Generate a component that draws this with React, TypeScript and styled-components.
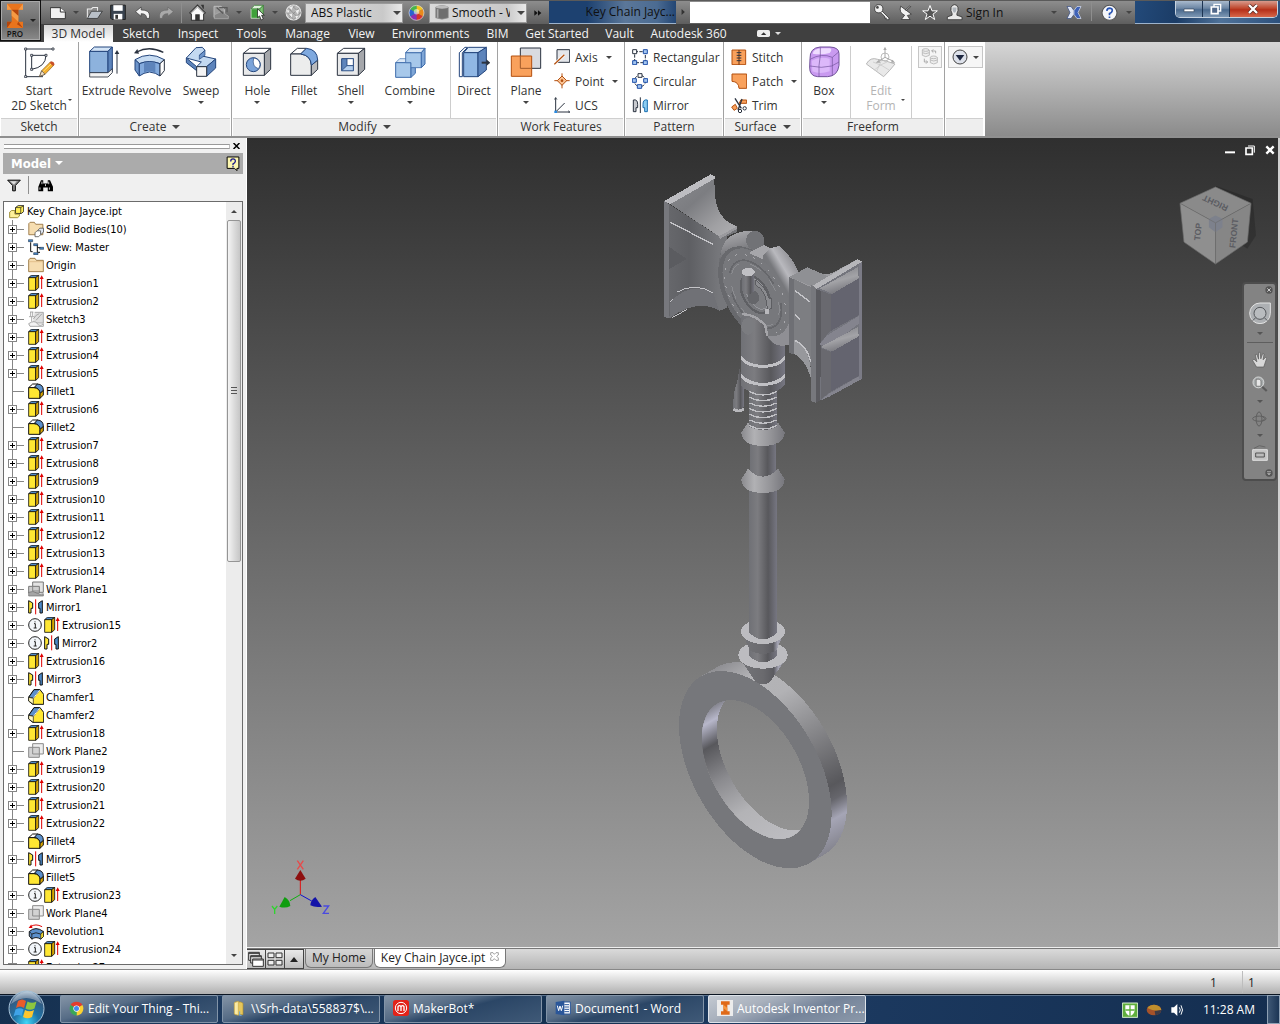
import React from "react";
import styled, { createGlobalStyle, css } from "styled-components";

const UI = `"Open Sans", "Noto Sans", sans-serif`;
const TREE = `"DejaVu Sans Condensed", "Noto Sans", sans-serif`;

const Global = createGlobalStyle`
  * { box-sizing: border-box; }
  html, body { margin: 0; padding: 0; }
  body { font-family: ${UI}; font-size: 12px; color: #333; overflow: hidden; }
  button, input, select { font: inherit; color: inherit; margin: 0; padding: 0; border: 0; background: none; border-radius: 0; }
  svg { display: block; flex: none; }
`;

/* ---------- shared pieces ---------- */

const Shell = styled.div`
  display: flex;
  flex-direction: column;
  height: 100vh;
  background: #c8c8c8;
`;

const Caret = styled.span<{ $size?: number; $color?: string }>`
  display: inline-block;
  flex: none;
  width: 0;
  height: 0;
  border-style: solid;
  border-color: ${(p) => p.$color || "#444"} transparent transparent;
  border-width: ${(p) => p.$size || 3}px ${(p) => p.$size || 3}px 0;
`;

type DrawProps = { box: string; w: number; h: number; children: React.ReactNode };
const Draw = ({ box, w, h, children }: DrawProps) => (
  <svg viewBox={box} width={w} height={h} fill="none" strokeWidth={3} aria-hidden="true">
    {children}
  </svg>
);

/* ---------- title area ---------- */

const Header = styled.header`
  display: flex;
  flex: none;
  height: 42px;
  background: #404040;
`;
const AppButton = styled.button`
  display: flex;
  align-items: center;
  justify-content: center;
  gap: 5px;
  width: 41px;
  height: 41px;
  flex: none;
  border: 1px solid #111;
  background: linear-gradient(#8d8d8d, #6a6a6a 60%, #8a8a8a);
  box-shadow: inset 0 0 0 1px #a8a8a8;
`;
const AppMark = styled.span`
  display: flex;
  flex-direction: column;
  align-items: center;
  font-size: 8px;
  line-height: 9px;
  font-weight: 600;
  color: #111;
`;
const HeaderRows = styled.div`
  display: flex;
  flex-direction: column;
  flex: 1;
  min-width: 0;
`;
const TitleBar = styled.div`
  display: flex;
  align-items: stretch;
  height: 24px;
  border-top: 1px solid #5a5a5a;
  background: linear-gradient(#8d8d8d, #5e5e5e);
`;
const QuickTools = styled.div`
  display: flex;
  align-items: center;
  padding-left: 5px;
`;
const Quick = styled.button<{ $w?: number }>`
  display: flex;
  align-items: center;
  justify-content: center;
  width: ${(p) => p.$w || 24}px;
  height: 22px;
`;
const QuickRule = styled.span`
  width: 1px;
  height: 20px;
  margin: 0 3px;
  background: #8e8e8e;
`;
const Picker = styled.label`
  position: relative;
  display: flex;
  align-items: center;
  width: 98px;
  height: 20px;
  padding-left: 5px;
  gap: 3px;
  color: #111;
  background: linear-gradient(90deg, #d9d9d9, #c9c9c9 80%, #e8e8e8);
  border: 1px solid #999;
  select {
    flex: 1;
    min-width: 0;
    height: 18px;
    appearance: none;
    padding-right: 16px;
  }
  ${Caret} {
    position: absolute;
    right: 1px;
    top: 7px;
  }
`;
const DocTitle = styled.div`
  width: 127px;
  padding-right: 1px;
  line-height: 22px;
  text-align: right;
  color: #101010;
  background: linear-gradient(90deg, #1d4170 0 30%, #5b7799 60%, #4b6b92 85%, #234674);
  border-bottom: 1px solid #9db3cc;
`;
const Search = styled.input`
  width: 180px;
  margin-top: 1px;
  height: 21px;
  background: #fff;
`;
const SignIn = styled.button`
  width: 82px;
  text-align: left;
  color: #111;
`;
const Glass = styled.div`
  display: flex;
  flex: 1;
  justify-content: flex-end;
  align-items: flex-start;
  padding-right: 2px;
  background: linear-gradient(100deg, #234a7a, #1b3c66 30%, #4f7299 60%, #2c507c);
  border-bottom: 1px solid #9db3cc;
`;
const WindowButtons = styled.div`
  display: flex;
  height: 17px;
  border: 1px solid #c7d3e0;
  border-top: 0;
  border-radius: 0 0 5px 5px;
  overflow: hidden;
`;
const WindowButton = styled.button<{ $close?: boolean }>`
  display: flex;
  align-items: center;
  justify-content: center;
  width: ${(p) => (p.$close ? 47 : 27)}px;
  border-right: 1px solid ${(p) => (p.$close ? "transparent" : "#1d3553")};
  background: ${(p) =>
    p.$close
      ? "linear-gradient(#d89a8c, #c0492f 45%, #b5301a 55%, #d7674a)"
      : "linear-gradient(#a9bacd, #6c86a4 45%, #4b6a8e 55%, #7d97b3)"};
`;

const TabRow = styled.nav`
  display: flex;
  align-items: stretch;
  height: 18px;
  padding: 1px 0 0 3px;
`;
const Tab = styled.button<{ $w: number; $on?: boolean }>`
  width: ${(p) => p.$w}px;
  line-height: 16px;
  white-space: nowrap;
  color: #f4f4f4;
  ${(p) =>
    p.$on &&
    css`
      color: #333;
      background: linear-gradient(#d4d4d4, #fff);
    `}
`;
const RibbonToggle = styled.button`
  display: flex;
  align-items: center;
  gap: 5px;
  margin-left: 23px;
`;

/* ---------- ribbon ---------- */

const Ribbon = styled.div`
  display: flex;
  flex: none;
  height: 94px;
  background: linear-gradient(#d6d6d6, #8b8b8b);
`;
const Panel = styled.section<{ $w: number }>`
  display: flex;
  flex-direction: column;
  width: ${(p) => p.$w}px;
  background: #fff;
  border-right: 1px solid #a2a2a2;
  &:last-of-type { border-right-color: #fff; }
`;
const PanelBody = styled.div<{ $pad?: number }>`
  display: flex;
  flex: 1;
  align-items: flex-start;
  padding: 4px 0 0 ${(p) => p.$pad || 0}px;
`;
const PanelName = styled.h2`
  display: flex;
  align-items: center;
  justify-content: center;
  gap: 6px;
  height: 18px;
  margin: 0 1px;
  padding-bottom: 2px;
  font-size: 12px;
  font-weight: 400;
  background: #eeeeee;
  border-top: 1px solid #cfcfcf;
`;
const Big = styled.button<{ $w: number; $off?: boolean }>`
  display: flex;
  flex-direction: column;
  align-items: center;
  width: ${(p) => p.$w}px;
  height: 70px;
  line-height: 15px;
  white-space: nowrap;
  color: ${(p) => (p.$off ? "#b4b4b4" : "#333")};
  svg { margin-bottom: 5px; }
`;
const BigCaret = styled(Caret)`
  margin-top: 3px;
`;
const Anchor = styled.div`
  position: relative;
`;
const SideCaret = styled.span`
  position: absolute;
  right: 6px;
  bottom: 15px;
  line-height: 0;
`;
const Rule = styled.span<{ $gap?: number }>`
  width: 1px;
  height: 72px;
  margin-left: ${(p) => p.$gap || 0}px;
  background: #cdcdcd;
`;
const SmallList = styled.div`
  display: flex;
  flex-direction: column;
`;
const Small = styled.button`
  display: flex;
  align-items: center;
  gap: 5px;
  height: 24px;
  margin: -1px 0 1px;
  white-space: nowrap;
  ${Caret} { margin-left: 3px; }
`;
const PanelSlot = styled.div`
  padding-left: 6px;
`;
const Boxed = styled.button<{ $w: number }>`
  display: flex;
  align-items: center;
  justify-content: center;
  gap: 5px;
  width: ${(p) => p.$w}px;
  height: 22px;
  border: 1px solid #c6c6c6;
  background: #f6f6f6;
`;

/* ---------- ribbon drawings ---------- */

const INK = "#2b3340";
const BLUE = "#23457c";

const icons: Record<string, React.ReactNode> = {
  start: (
    <Draw box="68 142 96 96" w={32} h={32}>
      <path d="M76 151H158M76 151V234H128M94 170H137Q136 205 94 212Z" stroke={INK} />
      <g fill="#fff" stroke={INK} strokeWidth={2.5}>
        <path d="M73 148h6v6h-6zM155 148h6v6h-6zM73 231h6v6h-6zM91 167h6v6h-6zM134 167h6v6h-6zM91 209h6v6h-6z" />
      </g>
      <path d="M118 233L124 216L150 190L161 199L134 227Z" fill="#f5b02e" stroke="#8a5a1d" strokeWidth={2} />
      <path d="M118 233L124 216L134 227Z" fill="#f6e2c6" stroke="#444" strokeWidth={2} />
      <path d="M148 192L153 188Q162 190 162 197L158 202Z" fill="#c8502a" />
      <path d="M129 218L152 196" stroke="#ffe27a" />
    </Draw>
  ),
  extrude: (
    <Draw box="263 142 96 96" w={32} h={32}>
      <path d="M268 158H323V222H268Z" fill="#8db2dd" stroke={BLUE} />
      <path d="M268 158L282 145H336L323 158Z" fill="#d3e4f6" stroke={BLUE} />
      <path d="M323 158L336 145V218L323 232Z" fill="#5d84bb" stroke={BLUE} />
      <path d="M268 222H323L336 210V222L323 235H268Z" fill="#f2f2f2" stroke={INK} strokeWidth={2.5} />
      <path d="M350 225V160" stroke={INK} strokeWidth={3} />
      <path d="M343 166L350 154L357 166Z" fill={INK} />
    </Draw>
  ),
  revolve: (
    <Draw box="400 142 96 96" w={32} h={32}>
      <path d="M408 160Q446 140 488 161" stroke={INK} strokeWidth={4} />
      <path d="M400 164L410 151L415 165Z" fill={INK} />
      <path d="M403 183Q446 156 491 183L478 195Q446 183 416 195Z" fill="#c7dcf2" stroke={BLUE} />
      <path d="M403 183L416 195V232L403 214Z" fill="#6d95cb" stroke={BLUE} />
      <path d="M416 195Q446 183 478 195V232L464 224Q446 216 430 224L416 232Z" fill="#84abdd" stroke={BLUE} />
      <path d="M430 194Q446 188 464 194V222Q446 214 430 222Z" fill="#5d84bb" />
      <path d="M478 195L491 183V216L478 232Z" fill="#fff" stroke={INK} />
    </Draw>
  ),
  sweep: (
    <Draw box="555 142 96 96" w={32} h={32}>
      <path d="M559 178V192L590 216V204Z" fill="#5d84bb" stroke={BLUE} />
      <path d="M559 178L588 147L607 146L615 155L598 170L647 181L620 204H590L604 190Z" fill="#c3d9f1" stroke={BLUE} />
      <path d="M615 155V170L598 182V170Z" fill="#6d95cb" stroke={BLUE} strokeWidth={2} />
      <path d="M620 204L647 181V208L620 233Z" fill="#5d84bb" stroke={BLUE} />
      <path d="M590 204H620V233H590Z" fill="#f4f4f4" stroke={INK} />
    </Draw>
  ),
  hole: (
    <Draw box="726 142 96 96" w={32} h={32}>
      <path d="M733 164L752 149H815L796 164Z" fill="#fff" stroke={INK} />
      <path d="M796 164L815 149V212L796 230Z" fill="#a5a7ab" stroke={INK} />
      <path d="M733 164H796V230H733Z" fill="#e8e9ea" stroke={INK} />
      <circle cx="763" cy="198" r="21" fill="#7aa3d9" stroke={BLUE} />
      <path d="M764 178A20 20 0 0 1 783 198Q782 206 778 210Q758 204 764 178Z" fill="#fff" stroke={BLUE} strokeWidth={2} />
    </Draw>
  ),
  fillet: (
    <Draw box="867 142 96 96" w={32} h={32}>
      <path d="M875 166L895 149H922L905 166Z" fill="#fff" stroke={INK} />
      <path d="M875 166H905Q936 170 937 200V230H875Z" fill="#eceded" stroke={INK} />
      <path d="M937 200L956 184V212L937 230Z" fill="#b9babd" stroke={INK} />
      <path d="M905 166L922 149Q955 152 956 184L937 200Q936 170 905 166Z" fill="#7fa9df" stroke={BLUE} />
    </Draw>
  ),
  shell: (
    <Draw box="1008 142 96 96" w={32} h={32}>
      <path d="M1015 164L1034 149H1097L1078 164Z" fill="#fff" stroke={INK} />
      <path d="M1078 164L1097 149V212L1078 230Z" fill="#a5a7ab" stroke={INK} />
      <path d="M1015 164H1078V230H1015Z" fill="#e8e9ea" stroke={INK} />
      <path d="M1028 180H1063V216H1028Z" fill="#5d84bb" stroke={BLUE} />
      <path d="M1044 180H1063V201H1044Z" fill="#fff" stroke={BLUE} strokeWidth={2.5} />
      <path d="M1028 216L1044 201H1063V216Z" fill="#b5d0ef" stroke={BLUE} strokeWidth={2} />
    </Draw>
  ),
  combine: (
    <Draw box="1184 142 96 96" w={32} h={32}>
      <path d="M1189 192L1201 180H1246L1235 192Z" fill="#dce9f7" stroke="#3e6cab" strokeWidth={2} />
      <path d="M1189 192H1235V236H1189Z" fill="#a7c8ea" stroke="#3e6cab" />
      <path d="M1235 206H1248V224L1235 236Z" fill="#7fa6d6" stroke="#3e6cab" />
      <path d="M1219 162H1266V207H1235V192H1219Z" fill="#a7c8ea" stroke="#3e6cab" strokeWidth={2.5} />
      <path d="M1219 162L1231 149H1277L1266 162Z" fill="#dce9f7" stroke="#3e6cab" />
      <path d="M1266 162L1277 149V196L1266 207Z" fill="#7fa6d6" stroke="#3e6cab" />
    </Draw>
  ),
  direct: (
    <Draw box="105 142 96 96" w={32} h={32}>
      <path d="M109 162L126 146H134L118 162V234H109Z" fill="#fff" stroke={BLUE} />
      <path d="M122 162L136 146H190L165 162Z" fill="#d3e4f6" stroke={BLUE} />
      <path d="M122 162H165V234H122Z" fill="#90b7e4" stroke={BLUE} />
      <path d="M165 162L190 146V214L165 234Z" fill="#5d84bb" stroke={BLUE} />
      <path d="M176 192H192" stroke={INK} strokeWidth={6} />
      <path d="M190 182L202 192L190 202Z" fill={INK} />
    </Draw>
  ),
  plane: (
    <Draw box="255 142 96 96" w={32} h={32}>
      <path d="M286 148H347V209H286Z" fill="#d9dbe0" stroke={INK} />
      <path d="M259 172H320V233H259Z" fill="#f9a15c" stroke="#b3500f" />
      <path d="M286 172V209H320" stroke="#a05a2a" />
    </Draw>
  ),
  axis: (
    <Draw box="393 146 48 48" w={16} h={16}>
      <path d="M402 148H440V186H402Z" fill="#e4e6ea" stroke={INK} />
      <path d="M394 192L424 163" stroke="#fff" strokeWidth={8} />
      <path d="M394 192L424 163" stroke="#b3500f" strokeWidth={4} />
    </Draw>
  ),
  point: (
    <Draw box="391 218 48 48" w={16} h={16}>
      <path d="M415 219V264M392 241H438" stroke="#b3500f" />
      <path d="M415 227L429 241L415 255L401 241Z" fill="#fbc394" stroke="#b3500f" />
      <circle cx="415" cy="241" r="4" fill="#b3500f" />
    </Draw>
  ),
  ucs: (
    <Draw box="392 290 48 48" w={16} h={16}>
      <path d="M397 333V293M397 335H439M397 335L424 308" stroke={INK} />
      <path d="M393 298L397 291L401 298M434 331L440 335L434 339" stroke={INK} strokeWidth={2} />
      <path d="M393 331h8v8h-8z" fill="#2a8be0" />
    </Draw>
  ),
  rectangular: (
    <Draw box="621 146 48 48" w={16} h={16}>
      <path d="M629 154H661V187H629Z" stroke={INK} strokeDasharray="10 4" />
      <path d="M623 148h12v12h-12z" fill="#fff" stroke={INK} />
      <path d="M655 148h12v12h-12zM623 181h12v12h-12zM655 181h12v12h-12z" fill="#a4c6f0" stroke="#1f4fa8" />
    </Draw>
  ),
  circular: (
    <Draw box="621 218 48 48" w={16} h={16}>
      <circle cx="645" cy="242" r="17" stroke={INK} strokeDasharray="8 4" />
      <path d="M639 220h12v11h-12z" fill="#fff" stroke={INK} />
      <path d="M622 235h12v11h-12zM656 235h12v11h-12zM637 253h13v11h-13z" fill="#a4c6f0" stroke="#1f4fa8" />
    </Draw>
  ),
  mirror: (
    <Draw box="619 290 48 48" w={16} h={16}>
      <path d="M644 291V339" stroke={INK} />
      <path d="M623 299Q636 296 636 312V322H631V334H623Z" fill="#c9cbd0" stroke={INK} />
      <path d="M665 299Q652 296 652 312V322H657V334H665Z" fill="#8ccdf2" stroke="#1b6fb0" />
    </Draw>
  ),
  stitch: (
    <Draw box="917 146 48 48" w={16} h={16}>
      <path d="M920 149H961V193H920Z" fill="#f9a15c" stroke="#b3500f" />
      <path d="M941 149V193" stroke="#6b3210" />
      <path d="M934 157H948M934 165H948M934 173H948M934 181H948" stroke={INK} />
    </Draw>
  ),
  patch: (
    <Draw box="917 218 48 48" w={16} h={16}>
      <path d="M920 221H964V264H941Q940 244 920 243Z" fill="#f9a15c" stroke="#b3500f" />
    </Draw>
  ),
  trim: (
    <Draw box="917 290 48 48" w={16} h={16}>
      <path d="M919 320L930 312L936 324L926 330Z" fill="#f9a15c" stroke="#b3500f" />
      <path d="M946 299H964V309H942Z" fill="#f9a15c" stroke="#b3500f" />
      <path d="M929 294L948 324M950 296L938 330" stroke={INK} strokeWidth={4} />
      <circle cx="958" cy="324" r="5" stroke={INK} />
      <circle cx="944" cy="332" r="5" stroke={INK} />
    </Draw>
  ),
  box: (
    <Draw box="1149 142 96 96" w={32} h={32}>
      <path d="M1155 180Q1154 148 1185 145H1215Q1242 146 1242 165V200Q1238 232 1208 234H1178Q1153 232 1154 205Z" fill="#c99af0" stroke="#70529a" />
      <path d="M1163 165Q1166 150 1190 149H1214Q1224 151 1214 163Q1190 170 1163 165Z" fill="#efdcff" />
      <path d="M1160 186Q1184 172 1214 180V218Q1184 228 1162 218Z" fill="#dcb8fa" />
      <path d="M1155 182Q1190 162 1222 176V232M1155 202Q1190 210 1220 202L1242 190M1186 146V170Q1180 200 1182 234M1222 176L1241 160" stroke="#70529a" strokeWidth={2} />
    </Draw>
  ),
  edit: (
    <Draw box="46 142 96 96" w={32} h={32}>
      <path d="M50 196Q62 174 84 182Q110 186 136 196Q122 214 102 234Q78 216 50 196Z" fill="#e9e9e9" stroke="#b9b9b9" />
      <path d="M70 190Q100 200 118 214M74 214Q92 196 112 190M94 188L80 220" stroke="#c6c6c6" strokeWidth={2} />
      <circle cx="106" cy="175" r="12" stroke="#bdbdbd" />
      <path d="M106 176V150M106 176L84 190M106 176L132 188" stroke="#a9a9a9" />
      <path d="M101 154L106 144L111 154ZM88 183L78 192L92 192ZM127 183L137 192L124 192Z" fill="#a9a9a9" />
    </Draw>
  ),
  convert: (
    <Draw box="214 146 54 54" w={18} h={18}>
      <g stroke="#b5b5b5" fill="#eee" strokeWidth={2.5}>
        <path d="M218 152V168Q228 176 239 168V152" />
        <ellipse cx="228" cy="152" rx="10" ry="4" />
        <path d="M242 174V190Q252 198 263 190V174" />
        <ellipse cx="252" cy="174" rx="10" ry="4" />
        <path d="M218 160Q228 166 239 160M242 182Q252 188 263 182" />
        <path d="M258 162V155H246M251 150L246 155L251 160M224 178V188H233M229 183L234 188L229 193" fill="none" stroke="#9f9f9f" />
      </g>
    </Draw>
  ),
  options: (
    <Draw box="304 146 48 48" w={16} h={16}>
      <circle cx="328" cy="170" r="21" fill="#dde1ea" stroke="#444" />
      <path d="M315 164H341L328 181Z" fill="#1d2740" />
    </Draw>
  ),
};

const quickIcons: Record<string, React.ReactNode> = {
  fresh: (
    <Draw box="150 16 48 42" w={16} h={14}>
      <path d="M151 21H181L196 34V54H151Z" fill="#f1f1f1" stroke="#333" />
      <path d="M181 21V34H196" stroke="#333" fill="#fff" />
    </Draw>
  ),
  open: (
    <Draw box="256 16 50 40" w={17} h={14}>
      <path d="M260 51V24H272L276 20H290V30" fill="#8b8b8b" stroke="#eee" />
      <path d="M260 52L272 31H304L290 52Z" fill="#b9c0c8" stroke="#222" strokeWidth={2} />
    </Draw>
  ),
  save: (
    <Draw box="330 12 48 50" w={16} h={17}>
      <path d="M332 15H376V58H336L332 54Z" fill="#39434f" stroke="#222" />
      <path d="M340 15H368V32H340Z" fill="#fff" />
      <path d="M341 41H367V58H341Z" fill="#fff" />
      <path d="M346 44H354V56H346Z" fill="#333" />
    </Draw>
  ),
  undo: (
    <Draw box="400 16 50 42" w={17} h={14}>
      <path d="M404 33L421 19V28Q446 28 446 44V53H437Q438 39 421 39V47Z" fill="#f4f4f4" stroke="#333" strokeWidth={2} />
    </Draw>
  ),
  redo: (
    <Draw box="474 16 50 42" w={17} h={14}>
      <path d="M520 33L503 19V28Q478 28 478 44V53H487Q486 39 503 39V47Z" fill="#a9a9a9" stroke="#666" strokeWidth={2} />
    </Draw>
  ),
  home: (
    <Draw box="565 10 50 50" w={17} h={17}>
      <path d="M567 36L590 13L613 36L608 40V58H572V40Z" fill="#fafafa" stroke="#333" />
      <path d="M585 42H595V58H585ZM601 14H607V24" fill="#333" stroke="#333" />
      <path d="M571 37L590 19L609 37" stroke="#555" strokeWidth={2} />
    </Draw>
  ),
  returnTo: (
    <Draw box="638 14 50 46" w={17} h={15}>
      <path d="M640 18H662L672 28V52H640Z" fill="#9c9c9c" stroke="#bcbcbc" />
      <path d="M641 44L662 34L668 28L674 42L684 48V56H641Z" fill="#858585" stroke="#b4b4b4" strokeWidth={2} />
      <path d="M648 22L668 40M656 22L680 22V36" stroke="#5a5a5a" strokeWidth={4} />
    </Draw>
  ),
  select: (
    <Draw box="746 10 50 50" w={17} h={17}>
      <path d="M752 24H778V52H752Z" fill="#3fa13a" stroke="#e7f5e3" strokeWidth={2} />
      <path d="M752 24L762 14H788L778 24Z" fill="#dff0dc" stroke="#2d7a29" strokeWidth={2} />
      <path d="M778 24L788 14V42L778 52Z" fill="#7cc474" stroke="#2d7a29" strokeWidth={2} />
      <path d="M771 24V50L777 45L782 57L788 54L783 43H791Z" fill="#fff" stroke="#111" strokeWidth={2} />
    </Draw>
  ),
  sphere: (
    <Draw box="850 10 50 50" w={17} h={17}>
      <circle cx="875" cy="35" r="22" fill="#b5b5b5" stroke="#e6e6e6" />
      <path d="M860 22L888 50M855 34L876 56M870 14L896 40M892 22L862 50M880 14L854 40M897 34L876 56" stroke="#858585" strokeWidth={2} />
      <path d="M862 20L874 16L870 28ZM880 30L892 26L888 40ZM862 40L872 38L870 50ZM880 46L890 44L884 54ZM856 28L864 30L858 38Z" fill="#eee" />
    </Draw>
  ),
  wheel: (
    <Draw box="1224 10 50 50" w={17} h={17}>
      <path d="M1249 36V14A22 22 0 0 1 1268 25Z" fill="#f3c41b" />
      <path d="M1249 36L1268 25A22 22 0 0 1 1268 47Z" fill="#e98a1c" />
      <path d="M1249 36L1268 47A22 22 0 0 1 1249 58Z" fill="#d8332a" />
      <path d="M1249 36V58A22 22 0 0 1 1230 47Z" fill="#8a2fb5" />
      <path d="M1249 36L1230 47A22 22 0 0 1 1230 25Z" fill="#2b62d0" />
      <path d="M1249 36L1230 25A22 22 0 0 1 1249 14Z" fill="#46b649" />
      <circle cx="1249" cy="36" r="22" stroke="#ddd" strokeWidth={2} />
      <circle cx="1249" cy="33" r="8" fill="#fff" opacity=".55" />
    </Draw>
  ),
  cylinder: (
    <Draw box="22 12 42 44" w={14} h={15}>
      <path d="M24 18Q43 8 62 18V50Q43 58 24 50Z" fill="#6f6f6f" stroke="#999" strokeWidth={2} />
      <ellipse cx="43" cy="18" rx="18" ry="5" fill="#bcbcbc" />
      <path d="M30 24V50" stroke="#aaa" strokeWidth={5} />
    </Draw>
  ),
  more: (
    <Draw box="326 28 24 18" w={8} h={6}>
      <path d="M327 29L337 37L327 45ZM338 29L348 37L338 45Z" fill="#111" />
    </Draw>
  ),
  right: (
    <Draw box="766 24 18 26" w={5} h={8}>
      <path d="M768 26L780 37L768 48Z" fill="#333" />
    </Draw>
  ),
  key: (
    <Draw box="72 12 50 50" w={17} h={17}>
      <path d="M94 31L116 53V58H108V53H103V48L90 36" fill="#f2f2f2" stroke="#222" strokeWidth={2} />
      <circle cx="86" cy="26" r="12" fill="#f2f2f2" stroke="#222" strokeWidth={2} />
      <circle cx="82" cy="22" r="4" fill="#444" />
    </Draw>
  ),
  dish: (
    <Draw box="144 12 48 50" w={16} h={17}>
      <path d="M152 18Q146 38 164 45L154 58H180L172 46Q180 44 184 42Z" fill="#f2f2f2" stroke="#222" strokeWidth={2} />
      <path d="M167 31L182 17" stroke="#222" strokeWidth={5} />
      <path d="M167 31L182 17" stroke="#fff" strokeWidth={2} />
    </Draw>
  ),
  star: (
    <Draw box="214 12 48 50" w={16} h={17}>
      <path d="M238 16L244 32H260L247 42L252 58L238 48L224 58L229 42L216 32H232Z" fill="#555" stroke="#fff" />
    </Draw>
  ),
  person: (
    <Draw box="286 10 50 50" w={17} h={17}>
      <path d="M290 56V48L304 43V38Q299 30 301 20Q304 12 311 12Q319 12 321 20Q323 30 318 38V43L333 48V56Z" fill="#e9e9e9" stroke="#222" strokeWidth={2} />
      <path d="M305 20Q305 34 311 36Q317 34 317 20Z" fill="#aeb4bb" />
    </Draw>
  ),
  exchange: (
    <Draw box="648 14 48 44" w={16} h={15}>
      <path d="M651 18H663L672 30V42L663 54H651L660 36Z" fill="#dfe6f5" stroke="#34497f" strokeWidth={2} />
      <path d="M693 18H681L672 30V42L681 54H693L684 36Z" fill="#3e62b8" stroke="#dfe6f5" strokeWidth={2} />
    </Draw>
  ),
  help: (
    <Draw box="752 10 50 50" w={17} h={17}>
      <circle cx="777" cy="36" r="22" fill="#f5f7fb" stroke="#555" />
      <path d="M769 30Q770 22 778 22Q786 23 785 30Q784 35 777 38V43M777 47V51" stroke="#2a55b5" strokeWidth={5} />
    </Draw>
  ),
};

const tabs: [string, number][] = [
  ["3D Model", 69], ["Sketch", 56], ["Inspect", 58], ["Tools", 49], ["Manage", 63], ["View", 45],
  ["Environments", 93], ["BIM", 41], ["Get Started", 78], ["Vault", 47], ["Autodesk 360", 91],
];

const TopArea = () => (
  <Header>
    <AppButton aria-label="Application menu">
      <AppMark>
        <Draw box="20 12 60 78" w={20} h={26}>
          <path d="M26 14H74V32H60V68H74V87H26V68H40V32H26Z" fill="#e8741d" />
          <path d="M26 14L40 32H26ZM60 32L74 14V32ZM40 32L60 50V68L40 50Z" fill="#f59a44" />
          <path d="M26 68L40 68L26 87ZM60 32V50L40 32ZM60 68L74 87L56 76Z" fill="#b3450c" />
        </Draw>
        PRO
      </AppMark>
      <Caret $color="#222" />
    </AppButton>
    <HeaderRows>
      <TitleBar>
        <QuickTools>
          <Quick aria-label="New">{quickIcons.fresh}</Quick>
          <Quick $w={12} aria-label="New options"><Caret /></Quick>
          <Quick aria-label="Open">{quickIcons.open}</Quick>
          <Quick aria-label="Save">{quickIcons.save}</Quick>
          <Quick aria-label="Undo">{quickIcons.undo}</Quick>
          <Quick aria-label="Redo">{quickIcons.redo}</Quick>
          <QuickRule />
          <Quick aria-label="Home">{quickIcons.home}</Quick>
          <Quick aria-label="Return">{quickIcons.returnTo}</Quick>
          <Quick $w={12} aria-label="Return options"><Caret /></Quick>
          <Quick aria-label="Select">{quickIcons.select}</Quick>
          <Quick $w={12} aria-label="Select options"><Caret /></Quick>
          <Quick aria-label="Material">{quickIcons.sphere}</Quick>
          <Picker>
            <select aria-label="Material"><option>ABS Plastic</option></select>
            <Caret $size={4} />
          </Picker>
          <Quick $w={26} aria-label="Appearance">{quickIcons.wheel}</Quick>
          <Picker>
            {quickIcons.cylinder}
            <select aria-label="Appearance"><option>Smooth - White</option></select>
            <Caret $size={4} />
          </Picker>
          <Quick $w={22} aria-label="More tools">{quickIcons.more}</Quick>
        </QuickTools>
        <DocTitle>Key Chain Jayc...</DocTitle>
        <Quick $w={14} aria-label="Show search">{quickIcons.right}</Quick>
        <Search aria-label="Search help" />
        <Quick aria-label="Search">{quickIcons.key}</Quick>
        <Quick aria-label="Subscription">{quickIcons.dish}</Quick>
        <Quick aria-label="Favorites">{quickIcons.star}</Quick>
        <Quick aria-label="Account">{quickIcons.person}</Quick>
        <SignIn>Sign In</SignIn>
        <Quick $w={12} aria-label="Account options"><Caret /></Quick>
        <Quick $w={28} aria-label="Exchange">{quickIcons.exchange}</Quick>
        <QuickRule />
        <Quick $w={28} aria-label="Help">{quickIcons.help}</Quick>
        <Quick $w={12} aria-label="Help options"><Caret /></Quick>
        <Glass>
          <WindowButtons>
            <WindowButton aria-label="Minimize">
              <Draw box="0 0 36 30" w={12} h={10}><path d="M3 15H33V23H3Z" fill="#fff" stroke="#3a4a5e" strokeWidth={2} /></Draw>
            </WindowButton>
            <WindowButton aria-label="Restore">
              <Draw box="0 0 36 36" w={12} h={12}>
                <path d="M12 4H32V24H12Z" stroke="#fff" strokeWidth={4} />
                <path d="M4 12H24V32H4Z" fill="#51688a" stroke="#fff" strokeWidth={5} />
              </Draw>
            </WindowButton>
            <WindowButton $close aria-label="Close">
              <Draw box="0 0 36 30" w={12} h={10}>
                <path d="M6 3L30 27M30 3L6 27" stroke="#5a2a22" strokeWidth={11} />
                <path d="M6 3L30 27M30 3L6 27" stroke="#fff" strokeWidth={7} />
              </Draw>
            </WindowButton>
          </WindowButtons>
        </Glass>
      </TitleBar>
      <TabRow>
        {tabs.map(([name, w], i) => (
          <Tab key={name} $w={w} $on={i === 0}>{name}</Tab>
        ))}
        <RibbonToggle aria-label="Collapse ribbon">
          <Draw box="0 0 39 21" w={13} h={7}>
            <rect width="39" height="21" rx="5" fill="#eee" />
            <path d="M12 15L20 7L28 15Z" fill="#333" />
          </Draw>
          <Caret $color="#ddd" />
        </RibbonToggle>
      </TabRow>
    </HeaderRows>
  </Header>
);

const RibbonBar = () => (
  <Ribbon>
    <Panel $w={79}>
      <PanelBody>
        <Anchor>
          <Big $w={78}>{icons.start}<span>Start</span><span>2D Sketch</span></Big>
          <SideCaret><Caret $size={2} /></SideCaret>
        </Anchor>
      </PanelBody>
      <PanelName>Sketch</PanelName>
    </Panel>
    <Panel $w={153}>
      <PanelBody $pad={1}>
        <Big $w={47}>{icons.extrude}Extrude</Big>
        <Big $w={46}>{icons.revolve}Revolve</Big>
        <Big $w={56}>{icons.sweep}Sweep<BigCaret /></Big>
      </PanelBody>
      <PanelName>Create <Caret $size={4} /></PanelName>
    </Panel>
    <Panel $w={266}>
      <PanelBody $pad={2}>
        <Big $w={47}>{icons.hole}Hole<BigCaret /></Big>
        <Big $w={47}>{icons.fillet}Fillet<BigCaret /></Big>
        <Big $w={47}>{icons.shell}Shell<BigCaret /></Big>
        <Big $w={71}>{icons.combine}Combine<BigCaret /></Big>
        <Rule $gap={5} />
        <Big $w={46}>{icons.direct}Direct</Big>
      </PanelBody>
      <PanelName>Modify <Caret $size={4} /></PanelName>
    </Panel>
    <Panel $w={127}>
      <PanelBody>
        <Big $w={56}>{icons.plane}Plane<BigCaret /></Big>
        <SmallList>
          <Small>{icons.axis}Axis <Caret /></Small>
          <Small>{icons.point}Point <Caret /></Small>
          <Small>{icons.ucs}UCS</Small>
        </SmallList>
      </PanelBody>
      <PanelName>Work Features</PanelName>
    </Panel>
    <Panel $w={99}>
      <PanelBody $pad={7}>
        <SmallList>
          <Small>{icons.rectangular}Rectangular</Small>
          <Small>{icons.circular}Circular</Small>
          <Small>{icons.mirror}Mirror</Small>
        </SmallList>
      </PanelBody>
      <PanelName>Pattern</PanelName>
    </Panel>
    <Panel $w={78}>
      <PanelBody $pad={7}>
        <SmallList>
          <Small>{icons.stitch}Stitch</Small>
          <Small>{icons.patch}Patch <Caret /></Small>
          <Small>{icons.trim}Trim</Small>
        </SmallList>
      </PanelBody>
      <PanelName>Surface <Caret $size={4} /></PanelName>
    </Panel>
    <Panel $w={143}>
      <PanelBody>
        <Big $w={44}>{icons.box}Box<BigCaret /></Big>
        <Rule $gap={4} />
        <Anchor>
          <Big $w={60} $off>{icons.edit}<span>Edit</span><span>Form</span></Big>
          <SideCaret><Caret $size={2} /></SideCaret>
        </Anchor>
        <Rule />
        <PanelSlot><Boxed $w={24} aria-label="Convert">{icons.convert}</Boxed></PanelSlot>
      </PanelBody>
      <PanelName>Freeform</PanelName>
    </Panel>
    <Panel $w={40}>
      <PanelBody $pad={3}>
        <Boxed $w={35} aria-label="Panel options">{icons.options}<Caret /></Boxed>
      </PanelBody>
      <PanelName />
    </Panel>
  </Ribbon>
);

/* ---------- browser tree ---------- */

const Middle = styled.div`
  display: flex;
  flex: 1;
  min-height: 0;
  border-top: 2px solid #8f8f8f;
`;
const Sidebar = styled.aside`
  display: flex;
  flex-direction: column;
  flex: none;
  width: 247px;
  padding: 1px 3px 4px;
  background: #f0f0f0;
  border-right: 1px solid #fff;
  font-family: ${TREE};
  font-size: 11px;
  color: #000;
`;
const GripRow = styled.div`
  display: flex;
  align-items: center;
  justify-content: space-between;
  height: 14px;
  padding: 0 3px 0 1px;
`;
const Grip = styled.span`
  width: 226px;
  height: 5px;
  border: 1px solid #9a9a9a;
  border-left: 0;
  border-right-color: #bbb;
  background: #fff;
`;
const Mini = styled.button`
  line-height: 0;
`;
const ModelBar = styled.div`
  display: flex;
  align-items: center;
  height: 21px;
  padding: 0 3px 1px 8px;
  background: #ababab;
`;
const ModelMenu = styled.button`
  display: flex;
  align-items: center;
  gap: 4px;
  flex: 1;
  font-size: 13px;
  font-weight: 700;
  color: #fff;
`;
const TreeTools = styled.div`
  display: flex;
  align-items: center;
  height: 27px;
  padding: 0 4px 5px;
  gap: 7px;
`;
const ToolRule = styled.span`
  width: 1px;
  height: 18px;
  background: #8f8f8f;
`;
const TreeBox = styled.div`
  display: flex;
  flex: 1;
  min-height: 0;
  border: 1px solid #6b6b6b;
  background: #fff;
`;
const Tree = styled.ul`
  flex: 1;
  margin: 0;
  padding: 0;
  list-style: none;
  overflow: hidden;
`;
const Node = styled.li<{ $root?: boolean }>`
  display: flex;
  align-items: center;
  gap: ${(p) => (p.$root ? 3 : 2)}px;
  height: 18px;
  padding-left: ${(p) => (p.$root ? 5 : 4)}px;
  white-space: nowrap;
`;
const Track = styled.div`
  display: flex;
  flex-direction: column;
  width: 16px;
  background: #ececec;
`;
const Arrow = styled.button<{ $down?: boolean }>`
  display: flex;
  align-items: center;
  justify-content: center;
  height: 18px;
  span { transform: ${(p) => (p.$down ? "none" : "rotate(180deg)")}; }
`;
const Thumb = styled.div`
  display: flex;
  align-items: center;
  justify-content: center;
  height: 342px;
  margin: 0 1px;
  border: 1px solid #959595;
  border-radius: 2px;
  background: linear-gradient(90deg, #f4f4f4, #dcdcdc 50%, #c6c6c6);
`;
const Spacer = styled.div`
  flex: 1;
`;

const Joint = ({ plus }: { plus: boolean }) => (
  <svg width={18} height={18} viewBox="0 0 36 36" shapeRendering="crispEdges" fill="none" strokeWidth={2} aria-hidden="true">
    <path d="M9 0V36M10 19H32" stroke="#868686" />
    {plus && <path d="M1 11H17V27H1Z" fill="#fff" stroke="#868686" />}
    {plus && <path d="M4 19H14M9 14V24" stroke="#000" />}
  </svg>
);

const treeIcons: Record<string, React.ReactNode> = {
  part: (
    <Draw box="26 202 46 44" w={15} h={15}>
      <path d="M46 212L54 206H71V224L64 230H46Z" fill="#ffee58" stroke="#111" strokeWidth={2.5} />
      <path d="M46 212H62V230M62 212L71 206" stroke="#111" strokeWidth={2} />
      <path d="M28 226L34 221H44V232H58V238L52 243H28Z" fill="#fdf09a" stroke="#8a7a1a" strokeWidth={2.5} />
    </Draw>
  ),
  solids: (
    <Draw box="84 252 48 52" w={16} h={17}>
      <path d="M86 294V260L90 256H103L107 262H129V294Z" fill="#f6ddb0" stroke="#8f6b36" strokeWidth={2.5} />
      <path d="M114 280L120 274H131V286L124 292H114Z" fill="#dfe6f2" stroke="#555" strokeWidth={2.5} />
      <path d="M105 288L111 282H122V294L116 300H105Z" fill="#fff" stroke="#555" strokeWidth={2.5} />
    </Draw>
  ),
  view: (
    <Draw box="84 308 48 48" w={16} h={16}>
      <path d="M92 318V346H98M106 326H112V348H120M112 334H122" stroke="#111" />
      <path d="M85 310h13v6h-13zM101 322h12v6h-12zM119 333h12v6h-12zM101 349h13v6h-13z" fill="#4a86c5" stroke="#123" strokeWidth={1.5} />
    </Draw>
  ),
  folder: (
    <Draw box="84 362 48 46" w={16} h={16}>
      <path d="M86 405V370L90 365H105L109 371H130V405Z" fill="#f6ddb0" stroke="#8f6b36" strokeWidth={2.5} />
      <path d="M88 375H129" stroke="#d9b27a" strokeWidth={2} />
    </Draw>
  ),
  extrusion: (
    <Draw box="84 416 48 48" w={16} h={16}>
      <path d="M86 424L94 417H116L108 424Z" fill="#4d8ac9" stroke="#111" strokeWidth={2.5} />
      <path d="M86 424H107V462H86Z" fill="#ffe733" stroke="#111" strokeWidth={2.5} />
      <path d="M107 424L116 417V454L107 462Z" fill="#d6a400" stroke="#111" strokeWidth={2.5} />
      <path d="M125 458V424" stroke="#e00000" />
      <path d="M119 428L125 417L131 428Z" fill="#e00000" />
    </Draw>
  ),
  sketch: (
    <Draw box="84 524 48 48" w={16} h={16}>
      <path d="M104 528H130V560H98" fill="#dedede" stroke="#9c9c9c" strokeWidth={2.5} />
      <path d="M90 527H100M92 527V540M98 527V540M87 541H103M95 541V556M108 552L126 532M100 548Q108 534 118 532" stroke="#9a9a9a" strokeWidth={2.5} />
      <path d="M86 562Q104 550 112 562Q120 572 130 562V570H90Z" fill="#f2f2f2" stroke="#9a9a9a" strokeWidth={2.5} />
    </Draw>
  ),
  fillet: (
    <Draw box="84 740 48 48" w={16} h={16}>
      <path d="M86 754L98 743H114L104 754Z" fill="#fff" stroke="#111" />
      <path d="M102 754L112 743Q130 744 130 762L120 772Q118 754 102 754Z" fill="#5b8fcb" stroke="#111" />
      <path d="M86 754H102Q120 756 120 772V786H86Z" fill="#ffe733" stroke="#111" />
      <path d="M120 772L130 762V776L120 786Z" fill="#d6a400" stroke="#111" />
    </Draw>
  ),
  chamfer: (
    <Draw box="84 386 48 48" w={16} h={16}>
      <path d="M86 411L102 388H120L131 402V432H98L86 422Z" fill="#ffe733" stroke="#111" />
      <path d="M86 411L102 388H120L100 414Z" fill="#5b8fcb" stroke="#111" />
      <path d="M86 411L100 414V432L86 422Z" stroke="#111" fill="#fff8c0" strokeWidth={2} />
      <path d="M100 414L120 388" stroke="#dce8f5" strokeWidth={3} />
    </Draw>
  ),
  mirror: (
    <Draw box="84 116 48 48" w={16} h={16}>
      <path d="M86 121L98 128V144H93V158H86Z" fill="#ffe733" stroke="#111" />
      <path d="M107 117V162" stroke="#e00000" />
      <path d="M127 121L116 128V144H120V158H127Z" fill="#4d8ac9" stroke="#111" />
    </Draw>
  ),
  plane: (
    <Draw box="84 548 48 48" w={16} h={16}>
      <path d="M98 550H130V581H98Z" fill="#ededed" stroke="#8b8b8b" />
      <path d="M86 561H118V591H86Z" fill="#d2d2d2" stroke="#8b8b8b" />
      <path d="M98 561V581H118" stroke="#8b8b8b" />
    </Draw>
  ),
  planeDark: (
    <Draw box="84 62 48 48" w={16} h={16}>
      <path d="M98 65H130V96H98Z" fill="#e3e3e3" stroke="#777" />
      <path d="M86 78H118V98H86Z" fill="#cdcdcd" stroke="#777" />
      <path d="M98 78V92H118" stroke="#888" />
      <path d="M86 96Q100 90 110 98Q120 104 130 100V107H86Z" fill="#a5a5a5" stroke="#6e6e6e" strokeWidth={2} />
    </Draw>
  ),
  revolution: (
    <Draw box="82 1086 50 52" w={16} h={17}>
      <path d="M90 1097Q106 1086 126 1097" stroke="#e00000" />
      <path d="M84 1101L92 1090L96 1101Z" fill="#e00000" />
      <path d="M86 1112Q106 1094 130 1112V1128L122 1136Q106 1126 94 1136L86 1126Z" fill="#5b8fcb" stroke="#111" />
      <path d="M86 1112L94 1120Q106 1112 122 1120L130 1112M94 1120V1136" stroke="#111" strokeWidth={2.5} />
      <path d="M122 1120L130 1112V1128L122 1136Z" fill="#ffe733" stroke="#111" strokeWidth={2} />
    </Draw>
  ),
  info: (
    <Draw box="81 174 42 42" w={14} h={14}>
      <circle cx="102" cy="195" r="19" fill="#f2f6fa" stroke="#222" />
      <path d="M99 191H103V204M98 204H107M102 184V187" stroke="#222" />
    </Draw>
  ),
};

type Row = [icon: string, label: string, plus?: 0 | 1, info?: 1];
const rows: Row[] = [
  ["solids", "Solid Bodies(10)"], ["view", "View: Master"], ["folder", "Origin"],
  ["extrusion", "Extrusion1"], ["extrusion", "Extrusion2"], ["sketch", "Sketch3"],
  ["extrusion", "Extrusion3"], ["extrusion", "Extrusion4"], ["extrusion", "Extrusion5"],
  ["fillet", "Fillet1", 0], ["extrusion", "Extrusion6"], ["fillet", "Fillet2", 0],
  ...[7, 8, 9, 10, 11, 12, 13, 14].map((n): Row => ["extrusion", `Extrusion${n}`]),
  ["planeDark", "Work Plane1"], ["mirror", "Mirror1"], ["extrusion", "Extrusion15", 1, 1],
  ["mirror", "Mirror2", 1, 1], ["extrusion", "Extrusion16"], ["mirror", "Mirror3"],
  ["chamfer", "Chamfer1", 0], ["chamfer", "Chamfer2", 0], ["extrusion", "Extrusion18"],
  ["plane", "Work Plane2", 0],
  ...[19, 20, 21, 22].map((n): Row => ["extrusion", `Extrusion${n}`]),
  ["fillet", "Fillet4", 0], ["mirror", "Mirror5"], ["fillet", "Fillet5", 0],
  ["extrusion", "Extrusion23", 1, 1], ["plane", "Work Plane4"], ["revolution", "Revolution1"],
  ["extrusion", "Extrusion24", 1, 1], ["extrusion", "Extrusion27"],
];

const ModelBrowser = () => (
  <Sidebar>
    <GripRow>
      <Grip />
      <Mini aria-label="Close browser">
        <svg width={7} height={6} viewBox="0 0 14 12"><path d="M1 0L13 12M13 0L1 12" stroke="#000" strokeWidth="3" /></svg>
      </Mini>
    </GripRow>
    <ModelBar>
      <ModelMenu>Model <Caret $size={4} $color="#fff" /></ModelMenu>
      <Mini aria-label="Browser help">
        <Draw box="678 56 42 46" w={14} h={15}>
          <path d="M681 59H717V94H711V101L704 94H681Z" fill="#fdf8b0" stroke="#000" />
          <path d="M692 73Q692 65 699 65Q707 65 706 73Q705 77 699 80V84M699 87V91" stroke="#1a1a8a" strokeWidth={4} />
        </Draw>
      </Mini>
    </ModelBar>
    <TreeTools>
      <Mini aria-label="Filter">
        <Draw box="21 130 42 38" w={14} h={13}>
          <path d="M23 133H61L46 149V165H38V149Z" fill="#8e8e8e" stroke="#000" />
          <path d="M30 136H50L42 146Z" fill="#ddd" />
        </Draw>
      </Mini>
      <ToolRule />
      <Mini aria-label="Find">
        <Draw box="108 130 56 40" w={19} h={13}>
          <path d="M114 168V154L122 134H129V144H143V134H150L159 154V168H143V156H129V168Z" fill="#000" />
          <path d="M119 156V163M148 156V163M125 138V146M146 138V146M136 146V152" stroke="#fff" strokeWidth={2.5} />
        </Draw>
      </Mini>
    </TreeTools>
    <TreeBox>
      <Tree>
        <Node $root>{treeIcons.part}Key Chain Jayce.ipt</Node>
        {rows.map(([icon, label, plus = 1, info]) => (
          <Node key={label}>
            <Joint plus={plus === 1} />
            {info && treeIcons.info}
            {treeIcons[icon]}
            {label}
          </Node>
        ))}
      </Tree>
      <Track>
        <Arrow aria-label="Scroll up"><Caret /></Arrow>
        <Thumb>
          <svg width={6} height={8} viewBox="0 0 12 16" shapeRendering="crispEdges">
            <path d="M0 1H12M0 7H12M0 13H12" stroke="#555" strokeWidth="2" />
          </svg>
        </Thumb>
        <Spacer />
        <Arrow $down aria-label="Scroll down"><Caret /></Arrow>
      </Track>
    </TreeBox>
  </Sidebar>
);

/* ---------- 3D view ---------- */

const Work = styled.main`
  display: flex;
  flex-direction: column;
  flex: 1;
  min-width: 0;
`;
const View = styled.div`
  position: relative;
  flex: 1;
  min-height: 0;
  border-right: 2px solid #d0d0d0;
  background: linear-gradient(#2f2f2f, #a4a4a4);
`;
const Scene = styled.svg`
  width: 100%;
  height: 100%;
`;
const ViewButtons = styled.div`
  position: absolute;
  top: 6px;
  right: 2px;
  display: flex;
  gap: 8px;
  button { line-height: 0; }
`;
const CubeSpot = styled.div`
  position: absolute;
  top: 47px;
  right: 17px;
`;
const TriadSpot = styled.div`
  position: absolute;
  left: 23px;
  bottom: 31px;
`;
const NavBar = styled.div`
  position: absolute;
  top: 144px;
  right: 1px;
  display: flex;
  flex-direction: column;
  align-items: center;
  justify-content: space-between;
  width: 35px;
  height: 199px;
  padding: 2px 0;
  border: 2px solid #4d4d4d;
  border-radius: 4px;
  background: #838383;
  button { line-height: 0; }
`;
const NavEnd = styled.button`
  align-self: flex-end;
  margin-right: 2px;
`;
const NavRule = styled.span`
  width: 26px;
  height: 1px;
  background: #5e5e5e;
`;

const coils = [0, 1, 2, 3, 4, 5, 6];

const Hammer = () => (
  <Scene viewBox="247 138 1031 809" shapeRendering="crispEdges" role="img" aria-label="Key chain model" fill="none">
    <defs>
      <linearGradient id="band" gradientUnits="userSpaceOnUse" x1="-324" x2="324" y1="0" y2="0">
        <stop offset="0" stopColor="#8f8f93" />
        <stop offset=".12" stopColor="#b4b4b7" />
        <stop offset=".25" stopColor="#b2b2b5" />
        <stop offset=".45" stopColor="#8d8d90" />
        <stop offset=".74" stopColor="#58585c" />
        <stop offset=".8" stopColor="#66666c" />
        <stop offset=".88" stopColor="#a5a5b5" />
        <stop offset="1" stopColor="#85858f" />
      </linearGradient>
      <linearGradient id="wall" gradientUnits="userSpaceOnUse" x1="-229" x2="229" y1="0" y2="0">
        <stop offset="0" stopColor="#85858f" />
        <stop offset=".08" stopColor="#b7b7ca" />
        <stop offset=".22" stopColor="#58585c" />
        <stop offset=".45" stopColor="#8b8b8f" />
        <stop offset=".7" stopColor="#b3b3b6" />
        <stop offset="1" stopColor="#bdbdc1" />
      </linearGradient>
      <linearGradient id="rod">
        <stop offset="0" stopColor="#707176" />
        <stop offset=".3" stopColor="#7c7c80" />
        <stop offset=".68" stopColor="#58585c" />
        <stop offset="1" stopColor="#767681" />
      </linearGradient>
      <linearGradient id="cone">
        <stop offset="0" stopColor="#8a8a8e" />
        <stop offset=".3" stopColor="#b1b1b4" />
        <stop offset=".7" stopColor="#929296" />
        <stop offset="1" stopColor="#77777d" />
      </linearGradient>
      <linearGradient id="cup">
        <stop offset="0" stopColor="#737478" />
        <stop offset=".5" stopColor="#6a6a6e" />
        <stop offset=".75" stopColor="#5b5b60" />
        <stop offset=".86" stopColor="#a3a3b2" />
        <stop offset="1" stopColor="#8b8b95" />
      </linearGradient>
      <linearGradient id="flare" x1="0" y1="0" x2="1" y2="1">
        <stop offset="0" stopColor="#8a8b8f" />
        <stop offset=".4" stopColor="#7c7d81" />
        <stop offset=".75" stopColor="#a0a0a3" />
        <stop offset="1" stopColor="#b0b0b3" />
      </linearGradient>
      <linearGradient id="innerFace">
        <stop offset="0" stopColor="#66676b" />
        <stop offset=".4" stopColor="#5e5f63" />
        <stop offset="1" stopColor="#76777b" />
      </linearGradient>
      <linearGradient id="tube" x1="0" y1="1" x2="1" y2="0">
        <stop offset="0" stopColor="#6a6b6f" />
        <stop offset=".45" stopColor="#77787c" />
        <stop offset=".6" stopColor="#b9b9be" />
        <stop offset="1" stopColor="#6a6a6e" />
      </linearGradient>
      <linearGradient id="torus" x1="0" y1="0" x2=".4" y2="1">
        <stop offset="0" stopColor="#b0b0b3" />
        <stop offset=".5" stopColor="#8f8f93" />
        <stop offset="1" stopColor="#68696d" />
      </linearGradient>
      <linearGradient id="bevel" x1="0" y1="0" x2=".4" y2="1">
        <stop offset="0" stopColor="#77777d" />
        <stop offset=".6" stopColor="#a3a3a7" />
        <stop offset="1" stopColor="#77777d" />
      </linearGradient>
      <clipPath id="bore"><ellipse rx="229" ry="131" /></clipPath>
    </defs>

    <g transform="translate(660 410) scale(.33333)">
      <g transform="translate(286 1079) rotate(60)">
        <path d="M-324 0V-53A324 187 0 0 1 324 -53V0A324 187 0 0 0 -324 0Z" fill="url(#band)" />
        <path clipPath="url(#bore)" fillRule="evenodd" fill="url(#wall)" d="M-240 -200H240V200H-240ZM-229 -53A229 131 0 0 0 229 -53A229 131 0 0 0 -229 -53Z" />
        <path fillRule="evenodd" fill="#76777b" d="M-324 0A324 187 0 0 1 324 0A324 187 0 0 1 -324 0ZM-229 0A229 131 0 0 0 229 0A229 131 0 0 0 -229 0Z" />
      </g>
      <path d="M244 752L286 815Q308 830 330 816L374 752Z" fill="url(#cup)" />
      <ellipse cx="309" cy="735" rx="74" ry="41" fill="#bcbcc0" />
      <path d="M268 715V738Q309 776 350 738V715Z" fill="url(#rod)" />
      <path d="M248 672L270 722Q309 742 349 722L370 672Z" fill="url(#cup)" />
      <ellipse cx="309" cy="665" rx="66" ry="37" fill="#bcbcc0" />
      <path d="M268 240V668Q309 708 351 668V240Z" fill="url(#rod)" />
      <path d="M264 176L244 208Q246 248 309 249Q372 248 374 208L354 176Q309 222 264 176Z" fill="url(#cone)" />
      <path d="M270 90H348V182Q309 218 270 182Z" fill="url(#rod)" />
      <path d="M264 38L244 68Q246 106 309 108Q372 106 374 68L354 38Q309 72 264 38Z" fill="url(#cone)" />
    </g>

    <g transform="translate(650 165) scale(.33333)">
      {/* left head */}
      <path d="M58 116L193 34L194 80Q198 150 240 174L260 184L207 214Z" fill="url(#flare)" />
      <path d="M43 108L182 28L194 33V41L60 118Z" fill="#bdbdc1" />
      <path d="M58 118L207 214V436Q140 396 58 460Z" fill="url(#innerFace)" />
      <path d="M58 246L110 282L58 312Z" fill="#5b5c60" />
      <path d="M62 410Q120 348 190 385L207 436Q140 400 58 460Z" fill="#707176" />
      <path d="M43 108L58 118V460L43 456Z" fill="#77787d" />
      <path d="M207 214L260 184L262 200L232 214V428L207 438Z" fill="#76777b" />
      <path d="M207 214L260 184V192L210 222Z" fill="#9a9a9e" />
      <path d="M60 172L190 238" stroke="#c4c4c8" strokeWidth="4" />
      <path d="M80 382Q135 350 190 384M62 410L70 402M66 458L110 434" stroke="#c4c4c8" strokeWidth="3" />

      {/* hub */}
      <path d="M210 330Q200 300 214 255Q234 202 300 198L340 225L345 250L400 255Q460 330 450 440L404 545L350 530L274 480Q215 410 210 330Z" fill="#6e6f73" />
      <path d="M210 280Q216 204 290 198Q345 196 340 240L298 266Q250 250 210 280Z" fill="url(#torus)" />
      <ellipse cx="315" cy="226" rx="27" ry="28" fill="#717276" />
      <g transform="translate(316 388) rotate(60)">
        <ellipse rx="158" ry="91" fill="#68696d" />
        <ellipse rx="148" ry="84" cy="-6" fill="#77787c" />
        <ellipse rx="112" ry="63" stroke="#66676b" strokeWidth="5" strokeDasharray="180 60" />
        <ellipse rx="104" ry="58" stroke="#8b8c90" strokeWidth="3" strokeDasharray="40 34" />
        <ellipse rx="132" ry="74" stroke="#a9a9ad" strokeWidth="3" strokeDasharray="6 22" />
        <ellipse rx="62" ry="36" stroke="#5f6064" strokeWidth="7" />
        <ellipse rx="52" ry="28" cy="-4" fill="#7d7e82" stroke="#94959a" strokeWidth="3" />
      </g>
      <path d="M296 264L342 240L368 252L342 284Z" fill="#a6a6aa" />
      <path d="M340 272L362 250L388 242Q440 290 446 330L418 340V420Q396 330 340 290Z" fill="url(#tube)" />
      <path d="M318 346Q350 370 356 400L366 402V430L352 436Q352 380 318 360Z" fill="#8b8c90" stroke="#5d5e62" strokeWidth="3" />
      <ellipse cx="310" cy="398" rx="18" ry="20" fill="#65666a" />
      <path d="M277 318V378Q294 398 313 378V318Z" fill="url(#rod)" />
      <ellipse cx="295" cy="321" rx="19" ry="13" fill="#c0c0c4" />
      <ellipse cx="351" cy="440" rx="7" ry="8" fill="#b9b9bd" />
      <path d="M348 510Q400 525 418 470V540L380 545Z" fill="#8f8f94" />

      {/* neck */}
      <path d="M268 612L278 640Q284 660 280 738L250 736Q248 680 262 650Z" fill="url(#rod)" />
      <path d="M250 732Q264 744 282 732" stroke="#b8b8bc" strokeWidth="8" />
      <path d="M297 670H381V785Q339 806 297 785Z" fill="url(#rod)" />
      {coils.map((n) => (
        <path key={n} d={`M298 ${680 + n * 17}Q339 ${700 + n * 17} 380 ${680 + n * 17}`} stroke="#c0c0c4" strokeWidth="4" />
      ))}
      <path d="M272 630V660Q290 684 339 685Q388 684 404 660V630Z" fill="url(#rod)" />
      <path d="M272 618V638Q290 661 339 663Q388 661 405 638V618Q388 652 339 654Q290 652 272 618Z" fill="#c0c0c4" />
      <path d="M274 575V625Q290 651 339 652Q388 651 404 625V575Z" fill="url(#rod)" />
      <path d="M272 562V584Q290 607 339 609Q388 607 405 584V562Q388 598 339 600Q290 598 272 562Z" fill="#c0c0c4" />
      <path d="M274 456Q300 436 326 462Q350 486 354 520Q372 545 404 542V572Q388 598 339 600Q290 598 274 572Z" fill="url(#rod)" />
      <path d="M276 448Q312 446 345 480L352 512" stroke="#a5a5a9" strokeWidth="7" />
      <ellipse cx="294" cy="484" rx="20" ry="25" fill="#7b7c80" />

      {/* right head */}
      <path d="M418 336L472 307L490 316Q505 330 545 325L622 283L635 290L497 374Z" fill="#9c9ca0" />
      <path d="M418 336L433 345V568L418 564Z" fill="#6e6f74" />
      <path d="M433 343L486 368V630Q476 545 433 525Z" fill="#7d7e82" />
      <path d="M418 336L472 307L540 336L490 366Z" fill="#8f9094" />
      <path d="M433 526Q480 536 486 650Q466 580 433 568Z" fill="#97989c" />
      <path d="M434 376L479 410M434 446L450 464M434 526Q470 540 482 590" stroke="#c4c4c8" strokeWidth="4" />
      <path d="M497 372L636 290V642L540 690L497 713Z" fill="#74757d" />
      <path d="M497 372L514 378V530L510 706L497 713Z" fill="#5a5a5f" />
      <path d="M514 378L542 388V498L514 528Z" fill="#69696f" />
      <path d="M514 550L542 560V680L514 702Z" fill="#69696f" />
      <path d="M542 388L628 340V450L542 498Z" fill="#64646f" />
      <path d="M542 560L628 512V632L542 680Z" fill="#64646f" />
      <path d="M510 370L624 306L626 340L546 387Z" fill="url(#bevel)" />
      <path d="M508 540L530 512L628 452L634 470L590 504L524 540Z" fill="#84848e" />
      <path d="M512 546L624 486L626 514L546 560Z" fill="url(#bevel)" />
      <path d="M510 708L534 688L630 632L635 642L540 694Z" fill="#84848e" />
      <path d="M484 360L497 368V713L484 709Z" fill="#77787d" />
      <path d="M488 362L622 283L636 290L500 372Z" fill="#b6b6ba" />
      <path d="M628 294H636V642H628Z" fill="#7b7b86" />
    </g>
  </Scene>
);

const Cube = () => (
  <svg width={83} height={81} viewBox="55 148 250 244" fill="none" aria-label="View cube" role="img">
    <path d="M168 150L280 190L290 300L264 340L200 300Z" fill="#000" opacity=".18" />
    <path d="M168 154L275 203L168 262L61 203Z" fill="#8a8a8a" />
    <path d="M61 203L168 262V386L73 320Z" fill="#8f8f8f" />
    <path d="M275 203L168 262V386L264 320Z" fill="#868686" />
    <path d="M148 250L168 240L189 250V275L168 290L148 275Z" fill="#7d818c" />
    <path d="M168 154L275 203L264 320L168 386L73 320L61 203ZM61 203L168 262L275 203M168 262V386" stroke="#6c6c6c" strokeWidth="2" />
    <g fill="#5b5c62" fontFamily="Liberation Sans, sans-serif" fontSize="26" fontWeight="700" textAnchor="middle">
      <text transform="translate(171 194) rotate(205)">RIGHT</text>
      <text transform="translate(124 290) rotate(-84)">TOP</text>
      <text transform="translate(232 294) rotate(-84)">FRONT</text>
    </g>
  </svg>
);

const Triad = () => (
  <svg width={62} height={58} viewBox="30 24 186 174" fill="none" aria-label="Axes" role="img">
    <path d="M121 134V90" stroke="#e01010" strokeWidth="3" />
    <path d="M121 134L90 152" stroke="#10b010" strokeWidth="3" />
    <path d="M121 134L155 153" stroke="#1010d0" strokeWidth="3" />
    <path d="M121 60L137 86Q121 98 105 86Z" fill="#8d0f0f" />
    <path d="M58 170L74 141Q90 150 91 168Q76 176 58 170Z" fill="#0f9d0f" />
    <path d="M186 170L166 141Q152 150 151 166Q166 174 186 170Z" fill="#1212a8" />
    <path d="M112 32L130 58M130 32L112 58" stroke="#e84a4a" strokeWidth="4" />
    <path d="M36 168L44 178L52 168M44 178V192" stroke="#2fd42f" strokeWidth="4" />
    <path d="M190 168H206L190 190H207" stroke="#4a4ae0" strokeWidth="4" />
  </svg>
);

const navCaret = <Caret $color="#555" />;

const Viewport = () => (
  <View>
    <Hammer />
    <ViewButtons>
      <button aria-label="Minimize document">
        <Draw box="0 0 36 36" w={12} h={12}><path d="M3 22H33V28H3Z" fill="#fff" /></Draw>
      </button>
      <button aria-label="Restore document">
        <Draw box="0 0 36 36" w={12} h={12}><path d="M12 6H31V26" stroke="#fff" /><path d="M6 12H25V31H6Z" stroke="#fff" strokeWidth={5} /></Draw>
      </button>
      <button aria-label="Close document">
        <Draw box="0 0 36 36" w={12} h={12}><path d="M7 7L29 29M29 7L7 29" stroke="#fff" strokeWidth={7} /></Draw>
      </button>
    </ViewButtons>
    <CubeSpot><Cube /></CubeSpot>
    <NavBar>
      <NavEnd aria-label="Close navigation bar">
        <Draw box="0 0 24 24" w={8} h={8}><circle cx="12" cy="12" r="11" fill="#555" /><path d="M7 7L17 17M17 7L7 17" stroke="#ccc" /></Draw>
      </NavEnd>
      <button aria-label="Steering wheel">
        <Draw box="267 506 66 66" w={22} h={22}>
          <path d="M300 509H331V540A31 31 0 1 1 300 509Z" fill="#adb0b3" stroke="#e3e3e3" />
          <circle cx="300" cy="540" r="18" fill="#b9bcbf" stroke="#55585c" />
          <path d="M287 553L278 562M313 553L322 562" stroke="#55585c" />
        </Draw>
      </button>
      {navCaret}
      <NavRule />
      <button aria-label="Pan">
        <Draw box="278 644 46 50" w={15} h={17}>
          <path d="M292 692L280 672L284 668L293 676L288 654L293 653L298 668L298 647L303 647L305 667L311 650L315 652L312 670L320 662L323 665L314 692Z" fill="#d8d8d8" stroke="#555" strokeWidth={2} />
        </Draw>
      </button>
      <button aria-label="Zoom">
        <Draw box="276 716 50 50" w={16} h={16}>
          <path d="M306 748L322 763" stroke="#5b5b5b" strokeWidth={7} />
          <circle cx="296" cy="736" r="17" fill="#a8acad" stroke="#d8dada" />
          <path d="M289 726H299L304 731V748H289Z" fill="#e6e6e6" stroke="#555" strokeWidth={2} />
        </Draw>
      </button>
      {navCaret}
      <button aria-label="Orbit">
        <Draw box="276 818 50 50" w={16} h={16}>
          <ellipse cx="298" cy="843" rx="9" ry="22" stroke="#5e5e5e" />
          <ellipse cx="299" cy="842" rx="21" ry="8" stroke="#5e5e5e" />
          <path d="M308 834L316 842L308 850" stroke="#5e5e5e" />
        </Draw>
      </button>
      {navCaret}
      <button aria-label="Look at">
        <Draw box="276 922 48 48" w={16} h={16}>
          <path d="M278 936H322V968H278Z" fill="#c3c3c3" stroke="#dedede" />
          <path d="M287 946H313V958H287Z" fill="#bbb" stroke="#555" />
          <path d="M282 932L298 924L316 928" stroke="#666" />
        </Draw>
      </button>
      <NavEnd aria-label="Navigation options">
        <Draw box="0 0 24 24" w={8} h={8}><circle cx="12" cy="12" r="11" fill="#555" /><path d="M6 8H18M8 13H16L12 18Z" stroke="#ccc" strokeWidth={2} /></Draw>
      </NavEnd>
    </NavBar>
    <TriadSpot><Triad /></TriadSpot>
  </View>
);

/* ---------- document tabs, status, taskbar ---------- */

const DocTabs = styled.div`
  display: flex;
  align-items: flex-start;
  height: 22px;
  border-top: 1px solid #efefef;
  box-shadow: inset 0 1px 0 #777;
  background: linear-gradient(#dcdcdc, #b4b4b4);
`;
const LayoutButton = styled.button`
  display: flex;
  align-items: center;
  justify-content: center;
  width: 19px;
  height: 20px;
  margin-top: 1px;
  border: 1px solid #444;
  border-left-width: 0;
  background: linear-gradient(#e9e9e9, #bdbdbd);
`;
const DocTab = styled.button<{ $on?: boolean }>`
  display: flex;
  align-items: flex-start;
  gap: 5px;
  height: 19px;
  margin: 1px 0 0 1px;
  padding: 0 6px;
  line-height: 18px;
  color: #222;
  border: 1px solid #777;
  border-top: 0;
  border-radius: 0 0 6px 6px;
  background: ${(p) => (p.$on ? "#fff" : "linear-gradient(#d5d5d5, #bcbcbc)")};
  svg { margin-top: 3px; }
`;
const Status = styled.footer`
  display: flex;
  align-items: center;
  justify-content: flex-end;
  flex: none;
  height: 25px;
  border-top: 1px solid #888;
  background: linear-gradient(#fff, #eee 20%, #b0b0b0);
  color: #222;
`;
const StatusCell = styled.span`
  width: 38px;
  padding: 2px 0 0 5px;
  line-height: 20px;
  border-left: 1px solid #bdbdbd;
  &:first-child { border-left-color: transparent; }
`;
const Taskbar = styled.div`
  display: flex;
  align-items: stretch;
  flex: none;
  height: 30px;
  border-top: 1px solid #0b1522;
  background: linear-gradient(100deg, #15304f, #1d3a5f 20%, #14304f 45%, #1d3b62 60%, #142e50);
  box-shadow: inset 0 1px 0 #5a728e;
  color: #fff;
`;
const Start = styled.button`
  position: relative;
  width: 60px;
  svg {
    position: absolute;
    left: 8px;
    bottom: -3px;
  }
`;
const Tasks = styled.div`
  display: flex;
  flex: 1;
  gap: 4px;
`;
const Task = styled.button<{ $on?: boolean }>`
  display: flex;
  align-items: center;
  gap: 4px;
  width: 158px;
  height: 28px;
  padding: 0 0 2px 8px;
  white-space: nowrap;
  border: 1px solid ${(p) => (p.$on ? "#dde3ea" : "#8294a8")};
  border-radius: 2px;
  background: ${(p) =>
    p.$on
      ? "linear-gradient(160deg, #c3c9d1, #a9b1bd 30%, #75849a 60%, #8c99aa)"
      : "linear-gradient(165deg, #8494a6, #566c86 35%, #2b4666 50%, #3f5977)"};
`;
const Tray = styled.div`
  display: flex;
  align-items: center;
  gap: 8px;
`;
const Clock = styled.time`
  margin: 0 4px 0 9px;
`;
const ShowDesktop = styled.button`
  width: 13px;
  height: 29px;
  border: 1px solid #8ea0b4;
  background: linear-gradient(90deg, #3f5876, #1c3555);
`;

const taskList: [string, React.ReactNode, boolean?][] = [
  ["Edit Your Thing - Thi...", (
    <Draw box="0 0 48 48" w={15} h={15}>
      <path d="M24 24L5 13A22 22 0 0 1 43 13Z" fill="#e33b2e" />
      <path d="M24 24L43 13A22 22 0 0 1 24 46Z" fill="#fbd231" />
      <path d="M24 24L24 46A22 22 0 0 1 5 13Z" fill="#3aa757" />
      <circle cx="24" cy="24" r="10" fill="#fff" /><circle cx="24" cy="24" r="8" fill="#4688f1" />
    </Draw>
  )],
  ["\\\\Srh-data\\558837$\\...", (
    <Draw box="0 0 48 48" w={16} h={16}>
      <path d="M12 6H30L36 10V44H12Z" fill="#e6c65c" stroke="#b08f2c" strokeWidth={2} />
      <path d="M10 8L22 4V46L10 42Z" fill="#faeaa6" stroke="#c9a845" strokeWidth={2} />
      <path d="M26 34V46H32" stroke="#6aa7dc" />
    </Draw>
  )],
  ["MakerBot*", (
    <Draw box="0 0 48 48" w={16} h={16}>
      <rect width="48" height="48" rx="8" fill="#e2231a" />
      <circle cx="24" cy="24" r="17" stroke="#fff" />
      <path d="M15 33V20Q19 14 24 20V33M24 20Q29 14 33 20V33" stroke="#fff" strokeWidth={4} />
    </Draw>
  )],
  ["Document1 - Word", (
    <Draw box="0 0 48 48" w={16} h={16}>
      <path d="M24 6H46V42H24Z" fill="#fff" stroke="#2a5699" />
      <path d="M28 14H42M28 21H42M28 28H42M28 35H42" stroke="#2a5699" />
      <path d="M2 6L28 2V46L2 42Z" fill="#2a5699" />
      <path d="M7 17L11 32L15 18L19 32L23 17" stroke="#fff" />
    </Draw>
  )],
  ["Autodesk Inventor Pr...", (
    <Draw box="0 0 48 48" w={16} h={16}>
      <path d="M0 0H48V48H0Z" fill="#ececec" />
      <path d="M12 4H38V14H31V34H38V44H12V34H19V14H12Z" fill="#e06a18" />
      <path d="M19 14L31 24V34L19 24Z" fill="#f59a44" />
    </Draw>
  ), true],
];

const Bottom = () => (
  <>
    <Status>
      <StatusCell>1</StatusCell>
      <StatusCell>1</StatusCell>
    </Status>
    <Taskbar>
      <Start aria-label="Start">
        <svg width={37} height={37} viewBox="0 0 37 37">
          <defs>
            <radialGradient id="orb" cx=".5" cy=".9" r=".9">
              <stop offset="0" stopColor="#3fd6f7" />
              <stop offset=".4" stopColor="#1e75a8" />
              <stop offset=".8" stopColor="#35597f" />
              <stop offset="1" stopColor="#9fb9cf" />
            </radialGradient>
          </defs>
          <circle cx="18.5" cy="18.5" r="17.5" fill="url(#orb)" stroke="#a8c3d8" />
          <path d="M10 11Q14 8 18 11L16 18Q12 15 8 18Z" fill="#ea5b2a" />
          <path d="M19.5 11.5Q24 14 28.5 11.5L26.5 18.5Q22 21 17.5 18.5Z" fill="#8cc63f" />
          <path d="M7.5 19.5Q12 17 15.5 19.5L13.5 26Q10 24 5.5 26.5Z" fill="#3fa4e8" />
          <path d="M17 20Q21.5 22.5 26 20L24 27Q19.5 29.5 15 27Z" fill="#fdc62f" />
          <path d="M3 14Q18 2 34 14Q28 1 18.5 1.5Q8 2 3 14Z" fill="#fff" opacity=".35" />
        </svg>
      </Start>
      <Tasks>
        {taskList.map(([name, icon, on]) => (
          <Task key={name} $on={on}>{icon}{name}</Task>
        ))}
      </Tasks>
      <Tray>
        <Draw box="0 0 48 48" w={16} h={16}>
          <path d="M1 3H47V46H1Z" fill="#5fae3c" stroke="#d8efcf" />
          <path d="M10 10H38V26Q36 38 24 42Q12 38 10 26Z" fill="#fff" />
          <path d="M24 10V42M10 24H38" stroke="#5fae3c" strokeWidth={4} />
        </Draw>
        <Draw box="0 0 48 48" w={16} h={16}>
          <ellipse cx="24" cy="24" rx="22" ry="16" fill="#a5522a" />
          <path d="M4 18Q14 6 30 9Q44 12 46 24Q26 30 4 18Z" fill="#c08f2d" />
          <path d="M26 27L46 24Q44 38 28 40Z" fill="#3d3a45" />
        </Draw>
        <Draw box="0 0 48 48" w={16} h={16}>
          <path d="M4 16H12L22 6V42L12 32H4Z" fill="#fff" />
          <path d="M28 16Q34 24 28 32M33 10Q42 24 33 38" stroke="#fff" />
        </Draw>
        <Clock>11:28 AM</Clock>
        <ShowDesktop aria-label="Show desktop" />
      </Tray>
    </Taskbar>
  </>
);

export default function App() {
  return (
    <Shell>
      <Global />
      <TopArea />
      <RibbonBar />
      <Middle>
        <ModelBrowser />
        <Work>
          <Viewport />
          <DocTabs>
            <LayoutButton aria-label="Cascade">
              <Draw box="0 0 48 48" w={16} h={16}>
                <path d="M2 4H34V28H2Z" fill="#ddd" stroke="#333" />
                <path d="M8 14H40V36H8Z" fill="#ddd" stroke="#333" />
                <path d="M14 24H46V46H14Z" fill="#fff" stroke="#333" />
                <path d="M2 7H34M8 17H40M14 27H46" stroke="#333" />
              </Draw>
            </LayoutButton>
            <LayoutButton aria-label="Tile">
              <Draw box="0 0 48 48" w={16} h={16}>
                <path d="M3 6H21V20H3ZM27 6H45V20H27ZM3 28H21V42H3ZM27 28H45V42H27Z" fill="#eee" stroke="#333" />
              </Draw>
            </LayoutButton>
            <LayoutButton aria-label="Show tabs">
              <Draw box="0 0 24 15" w={8} h={5}><path d="M0 15L12 0L24 15Z" fill="#222" /></Draw>
            </LayoutButton>
            <DocTab>My Home</DocTab>
            <DocTab $on>
              Key Chain Jayce.ipt
              <Draw box="0 0 27 27" w={9} h={9}>
                <path d="M2 2H9L13 7L18 2H25V9L20 13L25 18V25H18L13 20L9 25H2V18L7 13L2 9Z" stroke="#777" strokeWidth={2} />
              </Draw>
            </DocTab>
          </DocTabs>
        </Work>
      </Middle>
      <Bottom />
    </Shell>
  );
}
